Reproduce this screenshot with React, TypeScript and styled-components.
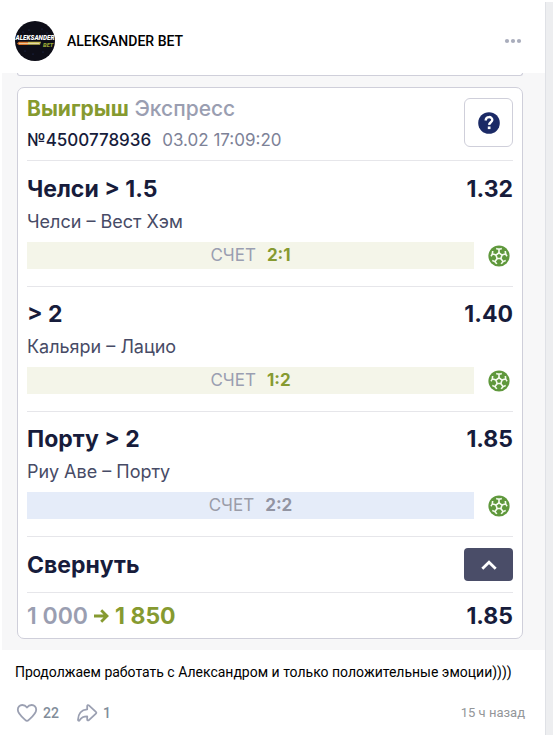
import React from "react";
import styled, { createGlobalStyle } from "styled-components";

const Global = createGlobalStyle`
  * { box-sizing: border-box; }
  body { margin: 0; background: #fff; font-family: Roboto, Arial, sans-serif; }
  button { font: inherit; margin: 0; padding: 0; border: 0; background: none; cursor: pointer; }
  p, h2, h3 { margin: 0; }
`;

const Page = styled.div`
  display: flex;
  padding: 2px;
`;

const Post = styled.article`
  flex: 1;
  min-width: 0;
`;

const Gutter = styled.div`
  width: 8px;
  background: #edeef0;
  border-left: 1px solid #dfe1e6;
`;

const PostHeader = styled.header`
  display: flex;
  align-items: center;
  gap: 12px;
  padding: 19px 23px 12px 13px;
`;

const Avatar = styled.svg`
  flex: none;
  width: 40px;
  height: 40px;
`;

const Author = styled.a`
  flex: 1;
  color: #000;
  font-size: 14px;
  line-height: 20px;
  font-weight: 500;
  text-decoration: none;
`;

const MoreButton = styled.button`
  display: flex;
`;

const Photo = styled.section`
  padding: 0 22px 11px 15px;
  background: #f7f7f8;
  font-family: Inter, sans-serif;
`;

const PreviousTicket = styled.div`
  height: 3px;
  margin-bottom: 11px;
  background: #fff;
  border: 1px solid #cfcfda;
  border-top: 0;
  border-radius: 0 0 7px 7px;
`;

const Ticket = styled.div`
  padding: 0 9px;
  background: #fff;
  border: 1px solid #cfcfda;
  border-radius: 7px;
`;

const TicketHeader = styled.div`
  display: flex;
  justify-content: space-between;
  align-items: flex-start;
  padding: 8px 0 10px;
  border-bottom: 1px solid #e6e6ea;
  margin-bottom: 1px;
`;

const Status = styled.h2`
  color: #9a9eb1;
  font-size: 21px;
  line-height: 26px;
  font-weight: 500;
`;

const Win = styled.span`
  color: #869a30;
  font-weight: 700;
`;

const Meta = styled.p`
  display: flex;
  gap: 11px;
  margin-top: 8px;
  color: #7d8297;
  font-size: 17px;
  line-height: 20px;
`;

const TicketNumber = styled.span`
  color: #171c3b;
  font-weight: 500;
`;

const HelpButton = styled.button`
  display: flex;
  align-items: center;
  justify-content: center;
  width: 49px;
  height: 49px;
  margin-top: 2px;
  border: 1px solid #cfcfda;
  border-radius: 6px;
`;

const Bet = styled.div`
  padding: 13px 0 17px;
  border-bottom: 1px solid #e6e6ea;
`;

const Line = styled.div`
  display: flex;
  justify-content: space-between;
  align-items: center;
`;

const Strong = styled.h3`
  color: #171c3b;
  font-size: 23px;
  line-height: 28px;
  font-weight: 700;
`;

const Teams = styled.p`
  margin: 8px 0 9px;
  color: #474b66;
  font-size: 18px;
  line-height: 22px;
`;

const Score = styled.div<{ $draw: boolean }>`
  flex: 1;
  display: flex;
  justify-content: center;
  gap: 11px;
  margin-right: 14px;
  background: ${(p) => (p.$draw ? "#e5ecf9" : "#f4f5e9")};
  color: ${(p) => (p.$draw ? "#9a9ca8" : "#9a9eb1")};
  font-size: 17px;
  line-height: 27px;

  b { color: ${(p) => (p.$draw ? "#9294a2" : "#869a30")}; }
`;

const BallIcon = styled.svg`
  flex: none;
  width: 22px;
  height: 22px;
  margin-right: 3px;
`;

const Collapse = styled(Line)`
  height: 56px;
  border-bottom: 1px solid #e6e6ea;
`;

const CollapseButton = styled.button`
  display: flex;
  align-items: center;
  justify-content: center;
  width: 49px;
  height: 33px;
  background: #4a4d68;
  border-radius: 4px;
`;

const Total = styled(Line)`
  height: 45px;
`;

const Payout = styled.div`
  display: flex;
  align-items: center;
  gap: 6px;
  color: #9a9eb1;
  font-size: 23px;
  line-height: 28px;
  font-weight: 600;
`;

const Message = styled.p`
  padding: 13px 13px 0;
  color: #000;
  font-size: 14px;
  line-height: 18px;
`;

const PostFooter = styled.footer`
  display: flex;
  align-items: center;
  gap: 16px;
  padding: 20px 20px 10px 13px;
`;

const Reaction = styled.button`
  display: flex;
  align-items: center;
  gap: 4px;
  color: #818c99;
  font-size: 14px;
  line-height: 24px;
  font-weight: 500;
`;

const Time = styled.time`
  margin-left: auto;
  color: #939699;
  font-size: 13px;
  line-height: 24px;
`;

const bets = [
  { pick: "Челси > 1.5", odds: "1.32", teams: "Челси – Вест Хэм", score: "2:1", draw: false },
  { pick: "> 2", odds: "1.40", teams: "Кальяри – Лацио", score: "1:2", draw: false },
  { pick: "Порту > 2", odds: "1.85", teams: "Риу Аве – Порту", score: "2:2", draw: true },
];

function Ball() {
  return (
    <BallIcon viewBox="0 0 22 22" aria-hidden="true">
      <circle cx="11" cy="11" r="10.6" fill="#5f983c" />
      <g stroke="#f5fbef" strokeWidth="1.6" fill="none">
        {[0, 72, 144, 216, 288].map((a) => (
          <path key={a} transform={`rotate(${a} 11 11)`} d="M11 8V3.6M8.2 3.4Q11 4.6 13.8 3.4" />
        ))}
        <path d="M11 7.8l3 2.2-1.1 3.5H9.1L8 10z" />
      </g>
    </BallIcon>
  );
}

export default function App() {
  return (
    <>
      <Global />
      <Page>
        <Post>
          <PostHeader>
            <Avatar viewBox="0 0 40 40" aria-hidden="true">
              <clipPath id="face"><circle cx="20" cy="20" r="20" /></clipPath>
              <g clipPath="url(#face)">
                <rect width="40" height="40" fill="#0d0d17" />
                <g fill="#27376a">
                  <circle cx="8" cy="11" r=".6" /><circle cx="14" cy="9" r=".6" />
                  <circle cx="27" cy="8" r=".6" /><circle cx="32" cy="12" r=".6" />
                  <circle cx="10" cy="30" r=".6" /><circle cx="18" cy="33" r=".6" />
                  <circle cx="28" cy="31" r=".6" />
                </g>
                <path d="M2 22.5l2-1.7h9v3.200H4z" fill="#d9772c" />
                <path d="M13 20.8h13l-1 3H13z" fill="#c9bd55" />
                <path d="M4 22.5h20" stroke="#f0e6c8" strokeWidth=".7" />
                <text x="20" y="18.5" textAnchor="middle" fill="#fff" fontFamily="Roboto, sans-serif" fontSize="6.4" fontWeight="900" fontStyle="italic">ALEKSANDER</text>
                <text x="28" y="26" fill="#98a535" fontFamily="Roboto, sans-serif" fontSize="5.8" fontWeight="900" fontStyle="italic">BET</text>
              </g>
            </Avatar>
            <Author href="#">ALEKSANDER BET</Author>
            <MoreButton aria-label="Ещё">
              <svg width="18" height="6" viewBox="0 0 18 6" fill="#a9adbc">
                <circle cx="3" cy="3" r="2.1" /><circle cx="9" cy="3" r="2.1" /><circle cx="15" cy="3" r="2.1" />
              </svg>
            </MoreButton>
          </PostHeader>

          <Photo>
            <PreviousTicket />
            <Ticket>
              <TicketHeader>
                <div>
                  <Status><Win>Выигрыш</Win> Экспресс</Status>
                  <Meta><TicketNumber>№4500778936</TicketNumber><span>03.02 17:09:20</span></Meta>
                </div>
                <HelpButton aria-label="Справка">
                  <svg width="22" height="22" viewBox="0 0 22 22" fill="none">
                    <circle cx="11" cy="11" r="10.8" fill="#1b2a66" />
                    <path d="M7.7 8.6C7.7 3.8 14.5 4.2 14.3 8c-.1 2.2-3.1 2.3-3.2 4.9" stroke="#fff" strokeWidth="2.4" />
                    <rect x="9.8" y="14.5" width="2.7" height="2.6" fill="#fff" />
                  </svg>
                </HelpButton>
              </TicketHeader>

              {bets.map((b) => (
                <Bet key={b.teams}>
                  <Line><Strong>{b.pick}</Strong><Strong as="span">{b.odds}</Strong></Line>
                  <Teams>{b.teams}</Teams>
                  <Line>
                    <Score $draw={b.draw}><span>СЧЕТ</span><b>{b.score}</b></Score>
                    <Ball />
                  </Line>
                </Bet>
              ))}

              <Collapse>
                <Strong>Свернуть</Strong>
                <CollapseButton aria-label="Свернуть">
                  <svg width="16" height="10" viewBox="0 0 16 10" fill="none" stroke="#fff" strokeWidth="2.8">
                    <path d="M1.3 8.7L8 2.2l6.7 6.5" />
                  </svg>
                </CollapseButton>
              </Collapse>

              <Total>
                <Payout>
                  <span>1 000</span>
                  <svg width="15" height="14" viewBox="0 0 15 14" fill="none" stroke="#869a30" strokeWidth="2.8">
                    <path d="M0 7h13M7.2 1.2L13 7l-5.8 5.8" />
                  </svg>
                  <Win>1 850</Win>
                </Payout>
                <Strong as="span">1.85</Strong>
              </Total>
            </Ticket>
          </Photo>

          <Message>Продолжаем работать с Александром и только положительные эмоции))))</Message>

          <PostFooter>
            <Reaction aria-label="Нравится: 22">
              <svg width="24" height="24" viewBox="0 0 24 24" fill="none" stroke="#9ba0b2" strokeWidth="1.8" strokeLinejoin="round">
                <path d="M12 6.6C10.6 4.6 8.9 4 7.3 4 4.6 4 2.8 6.1 2.8 8.8c0 3.8 3.4 6.5 7.6 10.3.9.9 2.3.9 3.2 0 4.2-3.8 7.6-6.5 7.6-10.3C21.2 6.1 19.4 4 16.7 4 15.1 4 13.4 4.6 12 6.6z" />
              </svg>
              22
            </Reaction>
            <Reaction aria-label="Поделиться: 1">
              <svg width="24" height="24" viewBox="0 0 24 24" fill="none" stroke="#9ba0b2" strokeWidth="1.8" strokeLinejoin="round">
                <path d="M12.2 8.3V5.1c0-1 1-1.3 1.7-.7l7 6.5c.6.5.6 1.2 0 1.7l-7 6.5c-.7.6-1.7.3-1.7-.7v-3.1c-3.9 0-6 1.2-7.6 3.9-.5.9-1.6.6-1.6-.4.1-5.6 3.200-10 9.200-10.500z" />
              </svg>
              1
            </Reaction>
            <Time>15 ч назад</Time>
          </PostFooter>
        </Post>
        <Gutter />
      </Page>
    </>
  );
}
